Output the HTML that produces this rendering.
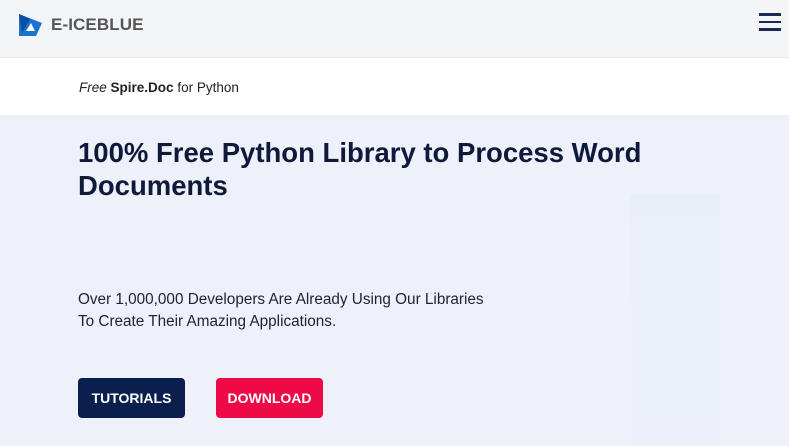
<!DOCTYPE html>
<html><head><meta charset="utf-8"><style>
*{margin:0;padding:0;box-sizing:border-box}
body{width:789px;height:446px;overflow:hidden;font-family:"Liberation Sans",sans-serif;background:#eef0fa;position:relative}
.hdr{position:absolute;left:0;top:0;width:789px;height:58px;background:#f4f5f7;border-bottom:1px solid #e6e7ea}
.logo{position:absolute;left:51px;top:15px;font-size:17px;color:#555;font-weight:bold;letter-spacing:0.1px}
.menu{position:absolute;left:759px;top:13px;width:22px}
.menu i{display:block;height:2.5px;background:#1b2a55;margin-bottom:5px}
.sub{position:absolute;left:0;top:58px;width:789px;height:57px;background:#fff}
.sub p{position:absolute;left:79px;top:22px;font-size:13.5px;color:#222}
h1{position:absolute;left:78px;top:136px;font-size:27.5px;line-height:33px;color:#0f1a3a;font-weight:bold;width:680px}
.desc{position:absolute;left:78px;top:289px;font-size:15.3px;line-height:22px;color:#1e2235}
.btn{position:absolute;top:378px;height:40px;width:107px;border-radius:4px;color:#fff;font-weight:bold;font-size:14px;text-align:center;line-height:40px}
.deco{position:absolute;left:630px;top:195px;width:90px;height:250px;background:linear-gradient(#e9eff9,#edf0fa)}
</style></head><body>
<div class="hdr">
<svg style="position:absolute;left:16px;top:11px" width="28" height="28" viewBox="0 0 28 28"><path d="M3 3 L26 12 L20 25 L3 25 Z" fill="#1a73d1"/><path d="M3 3 L14 8 L6 22 Z" fill="#0a4fa6"/><path d="M10 20 L15 12 L19 20 Z" fill="#fff"/></svg>
<div class="logo">E-ICEBLUE</div>
<div class="menu"><i></i><i></i><i></i></div>
</div>
<div class="sub"><p><i>Free</i> <b>Spire.Doc</b> for Python</p></div>
<div class="deco"></div>
<h1>100% Free Python Library to Process Word Documents</h1>
<div class="desc">Over 1,000,000 Developers Are Already Using Our Libraries<br>To Create Their Amazing Applications.</div>
<div class="btn" style="left:78px;background:#0b1f4f">TUTORIALS</div>
<div class="btn" style="left:216px;background:#ee0a46">DOWNLOAD</div>
</body></html>
